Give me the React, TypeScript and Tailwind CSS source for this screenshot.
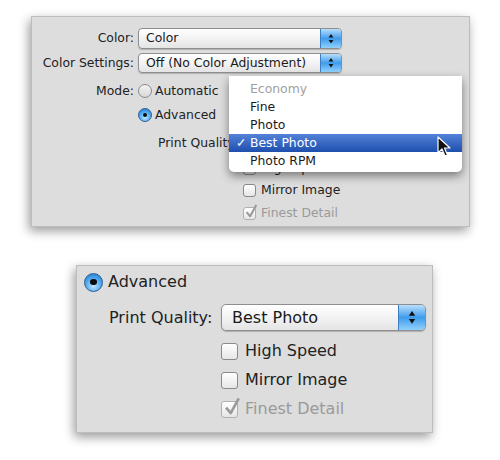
import React from 'react';

const font = { fontFamily: '"DejaVu Sans", "Liberation Sans", sans-serif' };

const Arrows: React.FC<{ size?: number }> = ({ size = 7 }) => (
  <svg width={size} height={size * 1.6} viewBox="0 0 10 16">
    <path d="M5 0 L9 6 L1 6 Z" fill="#111" />
    <path d="M1 10 L9 10 L5 16 Z" fill="#111" />
  </svg>
);

const Popup: React.FC<{ label: string; big?: boolean; className: string }> = ({ label, big, className }) => (
  <div
    className={`flex items-stretch border border-[#8e8e8e] bg-gradient-to-b from-white via-[#f3f3f3] to-[#e4e4e4] shadow-[0_1px_1px_rgba(0,0,0,0.2)] ${big ? 'rounded-[5px]' : 'rounded-[4px]'} ${className}`}
  >
    <div className={`flex flex-1 items-center whitespace-nowrap text-[#1a1a1a] ${big ? 'pl-[10px] text-[16px]' : 'pl-[7px] text-[12.4px]'}`}>{label}</div>
    <div
      className={`flex items-center justify-center border-l border-[#3a7fc4] bg-gradient-to-b from-[#b6defc] via-[#3d9cec] to-[#8fd0fc] ${big ? 'w-[27px] rounded-r-[4px]' : 'w-[21px] rounded-r-[3px]'}`}
    >
      <Arrows size={big ? 8 : 6} />
    </div>
  </div>
);

const Radio: React.FC<{ on?: boolean; size: number }> = ({ on, size }) => (
  <div
    className={`flex shrink-0 items-center justify-center rounded-full border ${on ? 'border-[#2b5f95] bg-[radial-gradient(circle_at_50%_70%,#bfe6ff_0%,#4aa5ee_55%,#1d6fc2_100%)]' : 'border-[#8a8a8a] bg-gradient-to-b from-[#f4f4f4] to-[#d7d7d7]'}`}
    style={{ width: size, height: size }}
  >
    {on && <div className="rounded-full bg-[#0d0d0d]" style={{ width: size * 0.32, height: size * 0.32 }} />}
  </div>
);

const Check: React.FC<{ checked?: boolean; disabled?: boolean; size: number }> = ({ checked, disabled, size }) => (
  <div
    className={`relative shrink-0 rounded-[3px] border bg-gradient-to-b from-white to-[#e6e6e6] ${disabled ? 'border-[#b0b0b0]' : 'border-[#8a8a8a]'}`}
    style={{ width: size, height: size }}
  >
    {checked && (
      <svg className="absolute" style={{ left: size * 0.1, top: -size * 0.25 }} width={size * 0.95} height={size * 1.1} viewBox="0 0 12 14">
        <path d="M1.5 8 L5 12 L11 1" fill="none" stroke={disabled ? '#9a9a9a' : '#222'} strokeWidth="2" strokeLinejoin="round" />
      </svg>
    )}
  </div>
);

const items = ['Economy', 'Fine', 'Photo', 'Best Photo', 'Photo RPM'];

const App: React.FC = () => {
  return (
    <div className="relative h-[460px] w-[500px] overflow-hidden bg-white" style={font}>
      {/* top panel */}
      <div className="relative ml-[31px] mt-[16px] h-[211px] w-[439px] border border-[#bdbdbd] bg-[#dddddd] shadow-[-2px_4px_10px_rgba(0,0,0,0.4)] text-[12.4px] text-[#222]">
        <div className="mt-[11px] flex h-[21px] items-center">
          <div className="w-[102px] whitespace-nowrap text-right">Color:</div>
          <Popup label="Color" className="ml-[4px] h-[21px] w-[204px]" />
        </div>
        <div className="mt-[4px] flex h-[20px] items-center">
          <div className="w-[102px] whitespace-nowrap text-right">Color Settings:</div>
          <Popup label="Off (No Color Adjustment)" className="ml-[4px] h-[20px] w-[204px]" />
        </div>
        <div className="mt-[9px] flex h-[18px] items-center">
          <div className="w-[102px] text-right">Mode:</div>
          <div className="ml-[4px] flex items-center gap-[3px]">
            <Radio size={14} />
            <span>Automatic</span>
          </div>
        </div>
        <div className="mt-[6px] flex h-[18px] items-center gap-[3px] pl-[106px]">
          <Radio on size={14} />
          <span>Advanced</span>
        </div>
        <div className="mt-[9px] flex h-[20px] items-center pl-[126px]">
          <span className="whitespace-nowrap">Print Quality:</span>
          <Popup label="Best Photo" className="ml-[4px] h-[20px] w-[220px]" />
        </div>
        <div className="mt-[6px] flex h-[18px] items-center gap-[5px] pl-[211px]">
          <Check size={13} />
          <span>High Speed</span>
        </div>
        <div className="mt-[4px] flex h-[18px] items-center gap-[5px] pl-[211px]">
          <Check size={13} />
          <span>Mirror Image</span>
        </div>
        <div className="mt-[5px] flex h-[18px] items-center gap-[5px] pl-[211px] text-[#9a9a9a]">
          <Check checked disabled size={13} />
          <span>Finest Detail</span>
        </div>

        {/* open menu */}
        <div className="absolute left-[197px] top-[59px] w-[233px] rounded-b-[5px] bg-white pb-[2px] pt-[4px] shadow-[0_4px_10px_rgba(0,0,0,0.45)]">
          {items.map((it, i) => {
            const sel = i === 3;
            return (
              <div
                key={it}
                className={`relative flex h-[18px] items-center pl-[21px] ${sel ? 'bg-gradient-to-b from-[#5382d8] to-[#1f4fae] text-white' : i === 0 ? 'text-[#a0a0a0]' : 'text-[#1a1a1a]'}`}
              >
                {sel && <span className="absolute left-[7px]">✓</span>}
                {it}
              </div>
            );
          })}
        </div>

        {/* cursor */}
        <svg className="absolute left-[405px] top-[119px]" width="16" height="24" viewBox="0 0 16 24">
          <path d="M1 1 L1 17 L5 13 L8 20 L10.5 19 L7.5 12 L13 12 Z" fill="#111" stroke="#fff" strokeWidth="1.2" strokeLinejoin="round" />
        </svg>
      </div>

      {/* bottom panel */}
      <div className="ml-[76px] mt-[38px] h-[168px] w-[357px] border border-[#bdbdbd] bg-[#dddddd] shadow-[-2px_4px_10px_rgba(0,0,0,0.4)] text-[16px] text-[#222]">
        <div className="mt-[6px] flex h-[20px] items-center gap-[5px] pl-[7px]">
          <Radio on size={19} />
          <span>Advanced</span>
        </div>
        <div className="mt-[12px] flex h-[27px] items-center pl-[32px]">
          <span className="w-[109px] whitespace-nowrap">Print Quality:</span>
          <Popup big label="Best Photo" className="ml-[3px] h-[27px] w-[205px]" />
        </div>
        <div className="mt-[10px] flex h-[20px] items-center gap-[7px] pl-[144px]">
          <Check size={17} />
          <span>High Speed</span>
        </div>
        <div className="mt-[9px] flex h-[20px] items-center gap-[7px] pl-[144px]">
          <Check size={17} />
          <span>Mirror Image</span>
        </div>
        <div className="mt-[9px] flex h-[20px] items-center gap-[7px] pl-[144px] text-[#9a9a9a]">
          <Check checked disabled size={17} />
          <span>Finest Detail</span>
        </div>
      </div>
    </div>
  );
};

export default App;
